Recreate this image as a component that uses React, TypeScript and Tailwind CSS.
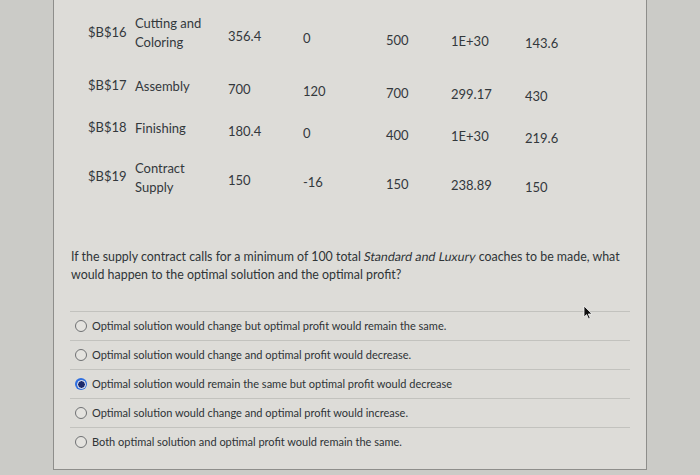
const rows = [
  { id: '$B$16', name: ['Cutting and', 'Coloring'], vals: ['356.4', '0', '500', '1E+30', '143.6'], h: 'h-[66px]' },
  { id: '$B$17', name: ['Assembly'], vals: ['700', '120', '700', '299.17', '430'], h: 'h-[40px]' },
  { id: '$B$18', name: ['Finishing'], vals: ['180.4', '0', '400', '1E+30', '219.6'], h: 'h-[44px]' },
  { id: '$B$19', name: ['Contract', 'Supply'], vals: ['150', '-16', '150', '238.89', '150'], h: 'h-[55px]' },
];

// value columns: width + slight downward drift (the photo is tilted)
const valCols = [
  'w-[75px] translate-y-[3px]',
  'w-[83px] translate-y-[5px]',
  'w-[65px] translate-y-[7px]',
  'w-[74px] translate-y-[8px]',
  'w-[60px] translate-y-[10px]',
];

const options = [
  'Optimal solution would change but optimal profit would remain the same.',
  'Optimal solution would change and optimal profit would decrease.',
  'Optimal solution would remain the same but optimal profit would decrease',
  'Optimal solution would change and optimal profit would increase.',
  'Both optimal solution and optimal profit would remain the same.',
];

export default function App() {
  return (
    <div className="w-[700px] h-[475px] overflow-hidden flex bg-[#cbcbc7] font-[family-name:Lato,sans-serif] text-[#33383c]">
      <div className="w-[53px] shrink-0" />
      <div className="relative w-[594px] h-[470px] shrink-0 bg-[#dddcd8] border-l border-r border-b border-[#8e8e8b]">
        {/* Table */}
        <div className="pl-[34px] text-[13px] leading-[19px]">
          {rows.map((r) => (
            <div key={r.id} className={`flex items-center ${r.h}`}>
              <div className="w-[47px] -translate-y-[1px]">{r.id}</div>
              <div className="w-[93px]">
                {r.name.map((n) => (
                  <div key={n}>{n}</div>
                ))}
              </div>
              {r.vals.map((v, i) => (
                <div key={i} className={valCols[i]}>
                  {v}
                </div>
              ))}
            </div>
          ))}
        </div>

        {/* Question */}
        <p className="mt-[43px] pl-[17px] pr-[10px] text-[12.4px] leading-[18px] text-[#2f3437]">
          If the supply contract calls for a minimum of 100 total{' '}
          <span className="inline-block -skew-x-[10deg]">Standard and Luxury</span> coaches to be made, what
          would happen to the optimal solution and the optimal profit?
        </p>

        {/* Answers */}
        <div className="mt-[27px] ml-[16px] w-[560px]">
          {options.map((o, i) => (
            <div key={i} className="h-[29px] flex items-center border-t border-[#c2c2be] pl-[5px]">
              {i === 2 ? (
                <span className="w-[12px] h-[12px] rounded-full bg-[#2f6fe0] flex items-center justify-center shrink-0">
                  <span className="w-[7px] h-[7px] rounded-full bg-[#1d2a6b] border border-white box-content" />
                </span>
              ) : (
                <span className="w-[12px] h-[12px] rounded-full border border-[#6f7173] bg-[#e4e3df] shrink-0" />
              )}
              <span className="ml-[5px] text-[11px] text-[#2e3336]">{o}</span>
            </div>
          ))}
        </div>

        {/* mouse pointer */}
        <svg className="absolute left-[529px] top-[305px]" width="11" height="15" viewBox="0 0 11 15">
          <path d="M1 1 L1 12 L3.6 9.6 L5.6 14 L7.2 13.2 L5.3 9 L9 9 Z" fill="#111" stroke="#f2f2f2" strokeWidth="0.8" />
        </svg>
      </div>
      <div className="flex-1" />
    </div>
  );
}
